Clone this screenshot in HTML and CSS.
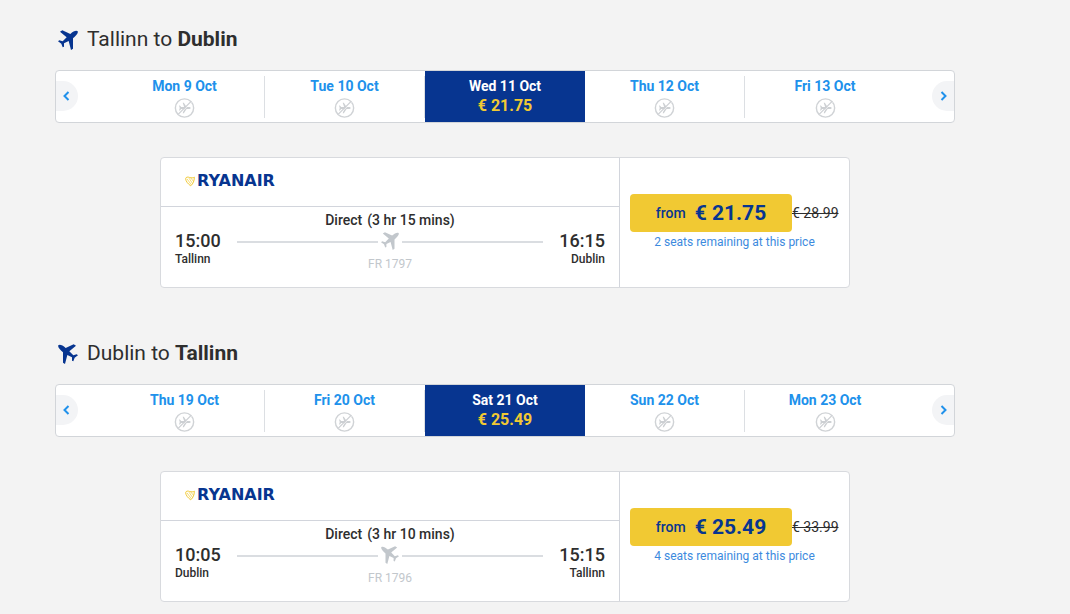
FILE: index.html
```html
<!DOCTYPE html>
<html lang="en">
<head>
<meta charset="UTF-8" />
<meta name="viewport" content="width=device-width, initial-scale=1" />
<title>Select flights</title>
<link rel="stylesheet" href="styles.css">
</head>
<body>
  <!-- Shared icons -->
  <svg class="sprite" aria-hidden="true">
    <symbol id="plane" viewBox="0 0 60 60">
      <path d="M59 4C55 0 46 4 37 12L13 1 6 5 26 22 14 34 4 31 0 34 10 41 14 52 18 50 18 40 32 33 39 60 45 56 45 25C53 18 62 9 59 4Z" />
    </symbol>
    <symbol id="no-flight" viewBox="0 0 21 21">
      <circle cx="10.5" cy="10.5" r="9.6" fill="none" stroke="#d0d3d6" stroke-width="1.5" />
      <path fill="#cdd0d3" d="M17 10.5c0-.7-1-1.1-2-1.1h-2.3L9.8 5H8.600l1.500 4.400H7L5.700 8H4.800l.7 2.500-.7 2.500h.9L7 11.600h3.100L8.600 16h1.200l2.900-4.400H15c1 0 2-.4 2-1.100z" />
      <path stroke="#fff" stroke-width="1" d="M4.800 17.400L17.600 4.600" />
      <path stroke="#cdd0d3" stroke-width="1.300" d="M3.800 17.200L17.200 3.800" />
    </symbol>
    <symbol id="harp" viewBox="0 0 30 32">
      <path fill="none" stroke="#f1c933" stroke-width="3" stroke-linejoin="round" d="M2 7C3 2 9 2 14 4S25 5 28 3C28 15 24 23 17 29 8 22 2 15 2 7Z" />
      <path fill="none" stroke="#f1c933" stroke-width="2" d="M6 8L19 26M12 6L22 21M18 6L25 15" />
    </symbol>
    <symbol id="left" viewBox="0 0 8 10">
      <path fill="none" stroke="#2091eb" stroke-width="2" d="M6.500 1L2.500 5l4 4" />
    </symbol>
    <symbol id="right" viewBox="0 0 8 10">
      <path fill="none" stroke="#2091eb" stroke-width="2" d="M1.500 1l4 4-4 4" />
    </symbol>
  </svg>

  <main class="flights">
    <!-- Outbound -->
    <section class="trip">
      <h2 class="trip-title"><svg class="title-icon"><use href="#plane" /></svg><span>Tallinn to <b>Dublin</b></span></h2>

      <div class="carousel">
        <button class="arrow prev" aria-label="Previous dates"><svg><use href="#left" /></svg></button>
        <ul class="dates">
          <li><button class="date">Mon 9 Oct<svg><use href="#no-flight" /></svg></button></li>
          <li><button class="date">Tue 10 Oct<svg><use href="#no-flight" /></svg></button></li>
          <li class="selected"><button class="date">Wed 11 Oct<span class="fare">€ 21.75</span></button></li>
          <li><button class="date">Thu 12 Oct<svg><use href="#no-flight" /></svg></button></li>
          <li><button class="date">Fri 13 Oct<svg><use href="#no-flight" /></svg></button></li>
        </ul>
        <button class="arrow next" aria-label="Next dates"><svg><use href="#right" /></svg></button>
      </div>

      <article class="card">
        <div class="info">
          <div class="airline"><svg><use href="#harp" /></svg><span>RYANAIR</span></div>
          <div class="schedule">
            <div class="stop"><time>15:00</time><span>Tallinn</span></div>
            <div class="route">
              <div class="duration"><span>Direct</span><span>(3 hr 15 mins)</span></div>
              <div class="line"><svg><use href="#plane" /></svg></div>
              <span class="number">FR 1797</span>
            </div>
            <div class="stop arrival"><time>16:15</time><span>Dublin</span></div>
          </div>
        </div>
        <div class="price">
          <div class="price-row">
            <button class="buy">from <strong>€ 21.75</strong></button>
            <s>€ 28.99</s>
          </div>
          <p class="seats">2 seats remaining at this price</p>
        </div>
      </article>
    </section>

    <!-- Return -->
    <section class="trip return">
      <h2 class="trip-title"><svg class="title-icon"><use href="#plane" /></svg><span>Dublin to <b>Tallinn</b></span></h2>

      <div class="carousel">
        <button class="arrow prev" aria-label="Previous dates"><svg><use href="#left" /></svg></button>
        <ul class="dates">
          <li><button class="date">Thu 19 Oct<svg><use href="#no-flight" /></svg></button></li>
          <li><button class="date">Fri 20 Oct<svg><use href="#no-flight" /></svg></button></li>
          <li class="selected"><button class="date">Sat 21 Oct<span class="fare">€ 25.49</span></button></li>
          <li><button class="date">Sun 22 Oct<svg><use href="#no-flight" /></svg></button></li>
          <li><button class="date">Mon 23 Oct<svg><use href="#no-flight" /></svg></button></li>
        </ul>
        <button class="arrow next" aria-label="Next dates"><svg><use href="#right" /></svg></button>
      </div>

      <article class="card">
        <div class="info">
          <div class="airline"><svg><use href="#harp" /></svg><span>RYANAIR</span></div>
          <div class="schedule">
            <div class="stop"><time>10:05</time><span>Dublin</span></div>
            <div class="route">
              <div class="duration"><span>Direct</span><span>(3 hr 10 mins)</span></div>
              <div class="line"><svg><use href="#plane" /></svg></div>
              <span class="number">FR 1796</span>
            </div>
            <div class="stop arrival"><time>15:15</time><span>Tallinn</span></div>
          </div>
        </div>
        <div class="price">
          <div class="price-row">
            <button class="buy">from <strong>€ 25.49</strong></button>
            <s>€ 33.99</s>
          </div>
          <p class="seats">4 seats remaining at this price</p>
        </div>
      </article>
    </section>
  </main>
</body>
</html>
```

FILE: styles.css
```css
* {
  box-sizing: border-box;
}

body {
  margin: 0;
  background: #f3f3f3;
  color: #2e2e2e;
  font-family: Roboto, "Liberation Sans", sans-serif;
  font-size: 14px;
  line-height: 20px;
}

button {
  border: none;
  padding: 0;
  background: none;
  font: inherit;
  color: inherit;
  cursor: pointer;
}

.sprite {
  display: none;
}

.flights {
  max-width: 900px;
  margin-left: 55px;
  padding: 26px 0 12px;
}

.trip + .trip {
  margin-top: 52px;
}

.trip-title {
  display: flex;
  align-items: center;
  gap: 9px;
  margin: 0 0 18px;
  padding-left: 3px;
  font-size: 21px;
  line-height: 26px;
  font-weight: 400;
}

.trip-title b {
  font-weight: 700;
}

.title-icon {
  width: 20px;
  height: 20px;
  margin-top: 2px;
  fill: #073590;
}

.return .title-icon,
.return .line svg {
  transform: scaleX(-1);
}

/* Date carousel */
.carousel {
  display: flex;
  justify-content: space-between;
  align-items: center;
  background: #fff;
  border: 1px solid #d2d5d9;
  border-radius: 4px;
}

.arrow {
  display: flex;
  align-items: center;
  width: 22px;
  height: 30px;
  margin-bottom: 2px;
  background: #f3f4f6;
}

.prev {
  padding-left: 6px;
  border-radius: 0 15px 15px 0;
}

.next {
  padding-left: 8px;
  border-radius: 15px 0 0 15px;
}

.arrow svg {
  width: 8px;
  height: 10px;
}

.dates {
  display: flex;
  flex: 1;
  margin: 0 27px;
  padding: 0;
  list-style: none;
}

.dates li {
  flex: 1;
  padding: 5px 0 4px;
}

.date {
  display: flex;
  flex-direction: column;
  align-items: center;
  width: 100%;
  height: 42px;
  border-right: 1px solid #dcdfe3;
  color: #2091eb;
  font-weight: 700;
}

.date svg {
  width: 21px;
  height: 21px;
  margin-top: 2px;
}

.dates li:last-child .date,
.selected .date {
  border-right: none;
}

.dates .selected {
  background: #073590;
}

.selected .date {
  color: #fff;
}

.fare {
  color: #f1c933;
  font-size: 16px;
}

/* Flight card */
.card {
  display: flex;
  max-width: 690px;
  margin: 34px auto 0;
  background: #fff;
  border: 1px solid #d8dade;
  border-radius: 4px;
}

.info {
  flex: 1;
  border-right: 1px solid #d2d5dc;
}

.airline {
  display: flex;
  align-items: center;
  gap: 2px;
  height: 49px;
  padding: 0 24px 2px;
  border-bottom: 1px solid #d2d5dc;
  color: #073590;
  font-family: "DejaVu Sans", sans-serif;
  font-size: 16px;
  font-weight: 700;
}

.airline svg {
  width: 10px;
  height: 11px;
}

.schedule {
  display: grid;
  grid-template-columns: auto 1fr auto;
  gap: 16px;
  height: 80px;
  padding: 3px 14px 0;
}

.stop {
  display: flex;
  flex-direction: column;
  padding-top: 21px;
  font-size: 12px;
  line-height: 16px;
  font-weight: 500;
}

.stop time {
  font-size: 18px;
  line-height: 20px;
}

.arrival {
  text-align: right;
}

.route {
  display: flex;
  flex-direction: column;
  text-align: center;
}

.duration {
  display: flex;
  justify-content: center;
  gap: 5px;
  font-weight: 500;
}

.line {
  display: flex;
  align-items: center;
  gap: 3px;
  height: 22px;
}

.line::before,
.line::after {
  content: "";
  flex: 1;
  height: 2px;
  margin-top: 2px;
  background: #dadde1;
}

.line svg {
  width: 18px;
  height: 18px;
  fill: #c2c7cc;
}

.number {
  margin-top: 4px;
  color: #c2c7cc;
  font-size: 12px;
  line-height: 16px;
}

/* Price */
.price {
  flex: 0 0 229px;
  padding-top: 36px;
}

.price-row {
  display: flex;
  align-items: center;
  padding-left: 10px;
}

.buy {
  display: flex;
  align-items: center;
  justify-content: center;
  gap: 9px;
  width: 162px;
  height: 38px;
  border-radius: 4px;
  background: #f1c933;
  color: #073590;
  font-weight: 500;
}

.buy strong {
  font-size: 21px;
  font-weight: 700;
}

.seats {
  margin: 0;
  color: #3c8ade;
  font-size: 12px;
  text-align: center;
}
```
